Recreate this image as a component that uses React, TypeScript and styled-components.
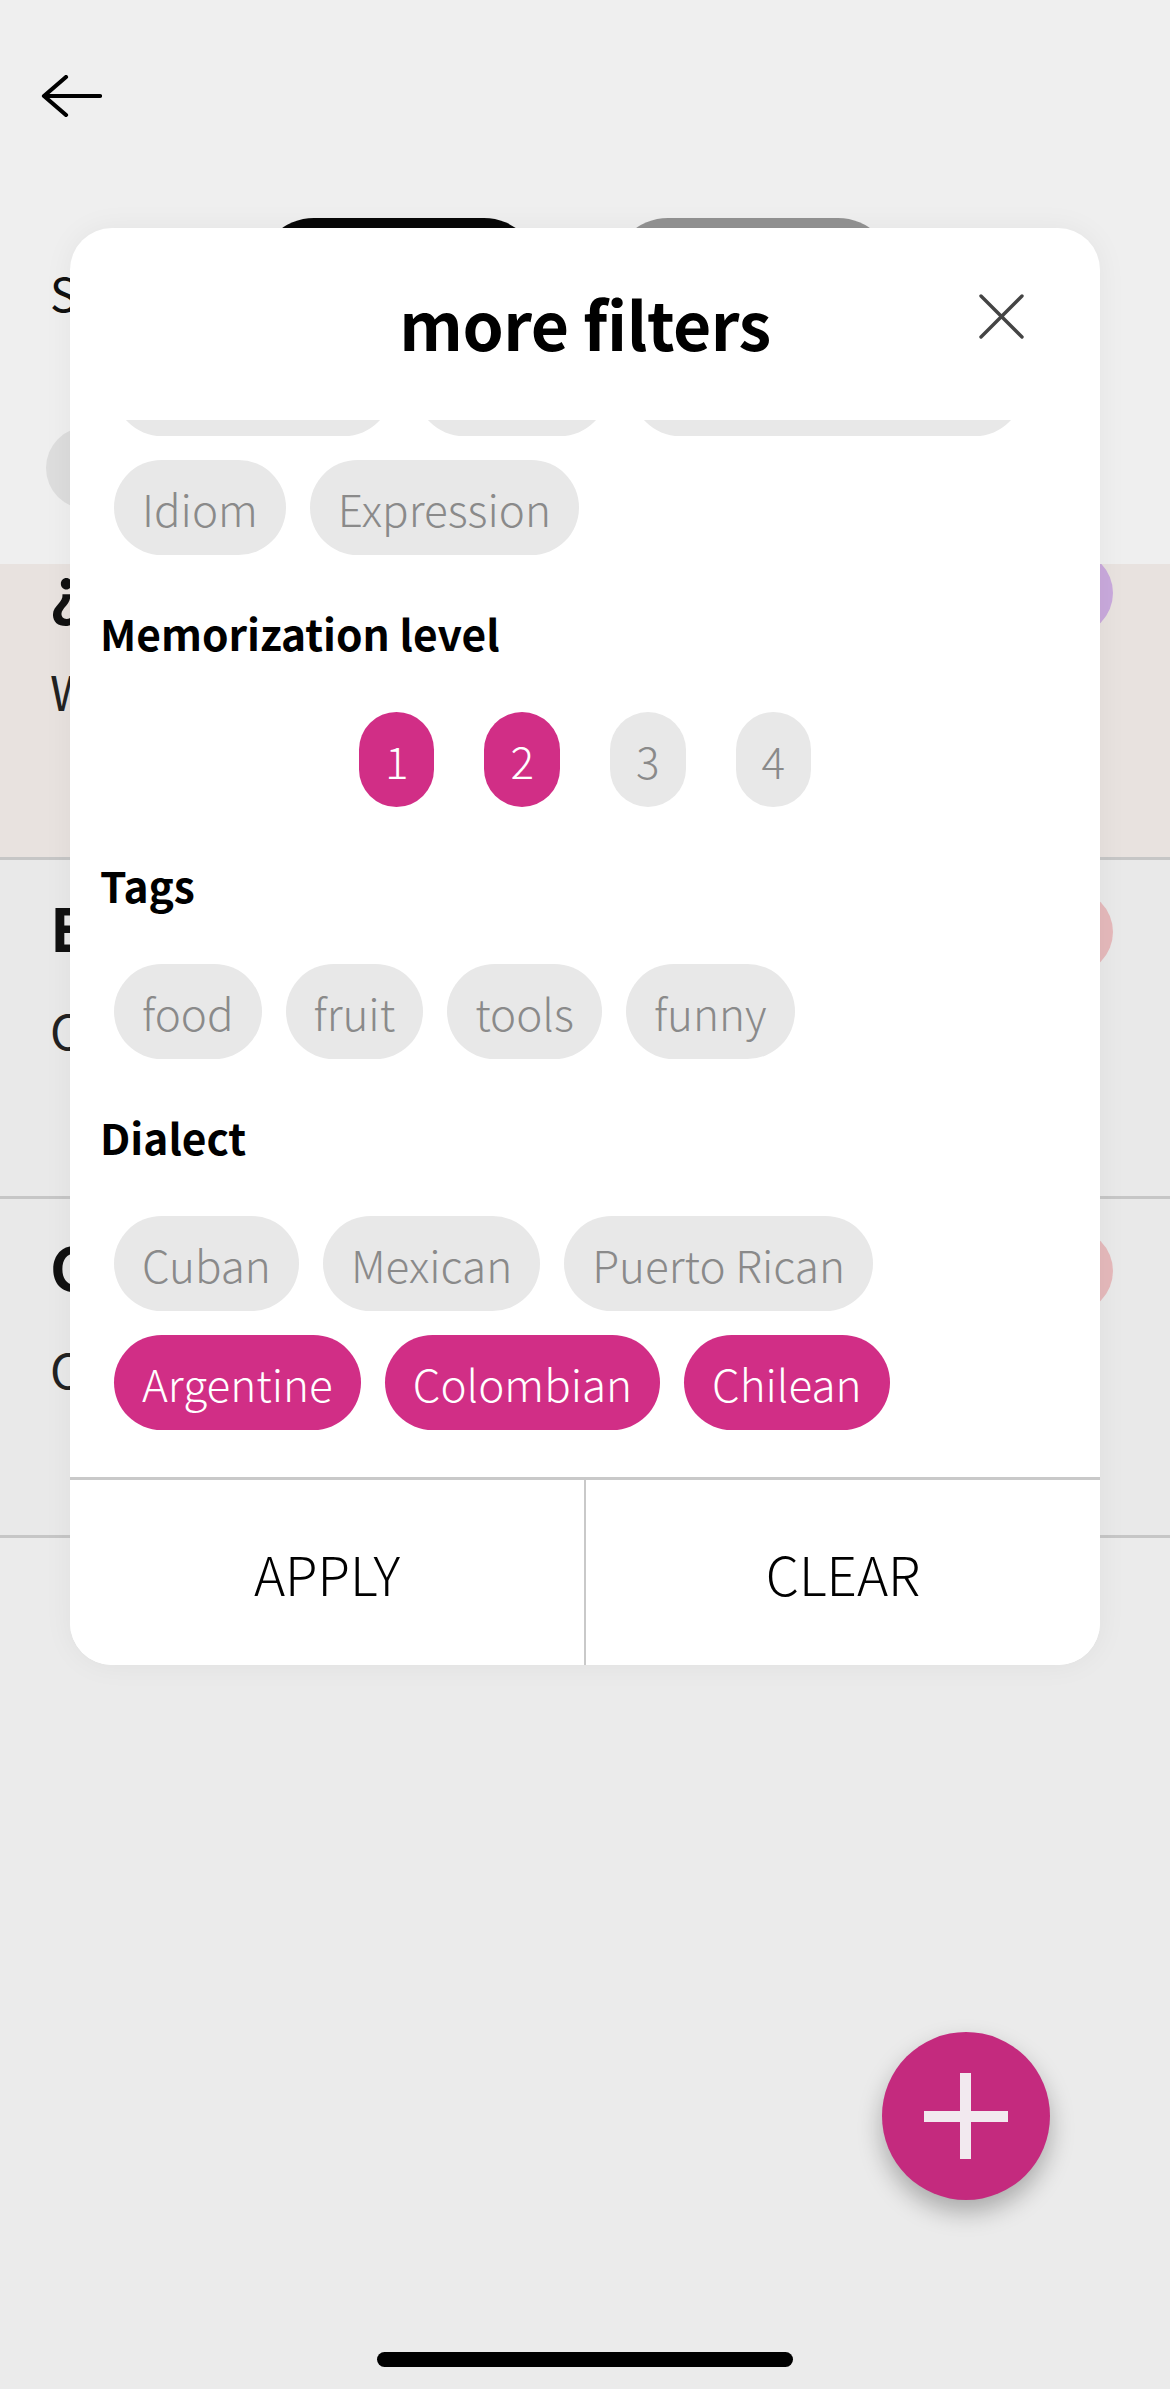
import React, { useLayoutEffect, useRef } from "react";
import styled, { createGlobalStyle } from "styled-components";

const GlobalStyle = createGlobalStyle`
  html, body { margin: 0; padding: 0; background: #ebebeb; }
  body { font-family: "Noto Sans CJK SC", "Noto Sans", sans-serif; }
  * { box-sizing: border-box; }
`;

const Screen = styled.div`
  position: relative;
  width: 1170px;
  height: 2389px;
  overflow: hidden;
  background: #ebebeb;
  display: flex;
  flex-direction: column;
  font-family: "Noto Sans CJK SC", "Noto Sans", sans-serif;
`;

const TopArea = styled.div`
  background: #efefef;
  height: 564px;
  flex-shrink: 0;
  display: flex;
  flex-direction: column;
  padding: 75px 0 0 41px;
`;

const BackButton = styled.div`
  width: 61px;
  height: 42px;
  display: flex;
`;

const SortRow = styled.div`
  margin-top: 101px;
  display: flex;
  align-items: center;
  height: 140px;
`;

const SortLabel = styled.span`
  font-size: 46px;
  color: #111;
  width: 217px;
  padding-left: 9px;
  padding-top: 8px;
`;

const SortPill = styled.div<{ $dark?: boolean }>`
  width: 282px;
  height: 140px;
  border-radius: 56px;
  background: ${(p) => (p.$dark ? "#080808" : "#929292")};
  margin-right: 72px;
`;

const FilterChipRow = styled.div`
  margin-top: 69px;
  display: flex;
  gap: 24px;
  padding-left: 5px;
`;

const FilterChip = styled.div`
  height: 82px;
  width: 260px;
  border-radius: 41px;
  background: #dddddd;
`;

const ListScroll = styled.div`
  flex: 1;
  overflow-y: auto;
  scrollbar-width: none;
  &::-webkit-scrollbar { display: none; }
`;

const Row = styled.div<{ $tint?: boolean }>`
  height: 339px;
  background: ${(p) => (p.$tint ? "#e8e2df" : "#e9e9e9")};
  border-bottom: 3px solid #c6c6c6;
  display: flex;
  justify-content: space-between;
  align-items: flex-start;
  padding: 30px 57px 0 50px;
`;

const RowText = styled.div`
  display: flex;
  flex-direction: column;
  gap: 38px;
`;

const RowTitle = styled.div`
  font-size: 60px;
  font-weight: 700;
  line-height: 72px;
  color: #111;
`;

const RowSub = styled.div`
  font-size: 48px;
  line-height: 58px;
  color: #222;
`;

const RowDot = styled.div<{ $color: string }>`
  width: 84px;
  height: 84px;
  border-radius: 50%;
  background: ${(p) => p.$color};
`;

const ListSpacer = styled.div`
  height: 1400px;
`;

const Fab = styled.button`
  position: absolute;
  right: 120px;
  bottom: 189px;
  width: 168px;
  height: 168px;
  border-radius: 50%;
  border: none;
  background: #c42a7e;
  box-shadow: 0 12px 24px rgba(0, 0, 0, 0.28);
  display: flex;
  align-items: center;
  justify-content: center;
  padding: 0;
`;

const HomeIndicator = styled.div`
  position: absolute;
  left: 377px;
  bottom: 22px;
  width: 416px;
  height: 15px;
  border-radius: 8px;
  background: #000;
`;

const Modal = styled.div`
  position: absolute;
  left: 70px;
  top: 228px;
  width: 1030px;
  height: 1437px;
  background: #fff;
  border-radius: 42px;
  box-shadow: 0 0 30px rgba(0, 0, 0, 0.05);
  display: flex;
  flex-direction: column;
  overflow: hidden;
`;

const ModalHeader = styled.div`
  height: 192px;
  flex-shrink: 0;
  display: grid;
  grid-template-columns: 1fr auto 1fr;
  align-items: start;
  padding-top: 54px;
`;

const ModalTitle = styled.h1`
  grid-column: 2;
  margin: 0;
  font-size: 66px;
  line-height: 80px;
  font-weight: 700;
  color: #000;
  letter-spacing: -0.5px;
`;

const CloseButton = styled.button`
  grid-column: 3;
  justify-self: end;
  margin: 12px 76px 0 0;
  width: 45px;
  height: 45px;
  padding: 0;
  border: none;
  background: none;
  display: flex;
`;

const ModalScroll = styled.div`
  flex: 1;
  overflow-y: auto;
  scrollbar-width: none;
  &::-webkit-scrollbar { display: none; }
`;

const ScrollContent = styled.div`
  display: flex;
  flex-direction: column;
  gap: 51px;
  padding: 30px 30px 47px 30px;
`;

const Section = styled.section`
  display: flex;
  flex-direction: column;
  gap: 53px;
`;

const SectionLabel = styled.h2`
  margin: 0;
  font-size: 42.5px;
  line-height: 53px;
  font-weight: 700;
  color: #000;
`;

const ChipList = styled.div<{ $center?: boolean }>`
  display: flex;
  flex-wrap: wrap;
  row-gap: 24px;
  column-gap: ${(p) => (p.$center ? "50px" : "24px")};
  justify-content: ${(p) => (p.$center ? "center" : "flex-start")};
  margin-left: ${(p) => (p.$center ? "0" : "14px")};
  max-width: ${(p) => (p.$center ? "none" : "930px")};
`;

const Chip = styled.span<{ $on?: boolean; $narrow?: boolean }>`
  display: inline-flex;
  align-items: center;
  justify-content: center;
  height: 95px;
  padding: 0 ${(p) => (p.$narrow ? "26px" : "28px")};
  border-radius: 999px;
  font-size: 44px;
  font-weight: 300;
  line-height: 1;
  background: ${(p) => (p.$on ? "#d12e86" : "#e8e8e8")};
  color: ${(p) => (p.$on ? "#ffffff" : "#8a8a8a")};
`;

const Footer = styled.div`
  flex-shrink: 0;
  height: 188px;
  border-top: 3px solid #c9c9c9;
  display: flex;
`;

const FooterButton = styled.button<{ $divider?: boolean }>`
  flex: 1;
  border: none;
  border-left: ${(p) => (p.$divider ? "2px solid #c9c9c9" : "none")};
  background: #fff;
  font-family: "Noto Sans CJK SC", "Noto Sans", sans-serif;
  font-size: 53px;
  font-weight: 300;
  color: #000;
  padding: 0;
`;

const ArrowIcon = () => (
  <svg width="61" height="42" viewBox="0 0 61 42" fill="none">
    <path d="M3 21 H59 M25 2 L3 21 L25 40" stroke="#000" strokeWidth="4.2" strokeLinecap="round" strokeLinejoin="round" />
  </svg>
);

const CloseIcon = () => (
  <svg width="45" height="45" viewBox="0 0 45 45" fill="none">
    <path d="M2 2 L43 43 M43 2 L2 43" stroke="#444" strokeWidth="3.4" strokeLinecap="round" />
  </svg>
);

const PlusIcon = () => (
  <svg width="84" height="86" viewBox="0 0 84 86">
    <rect x="36" y="0" width="11" height="86" fill="#f2e9ef" />
    <rect x="0" y="38" width="84" height="11" fill="#f2e9ef" />
  </svg>
);

const types = ["Vocabulary ", "Phrase", "Verb conjugation", "Idiom", "Expression"];
const levels = [
  { n: "1", on: true },
  { n: "2", on: true },
  { n: "3", on: false },
  { n: "4", on: false },
];
const tags = ["food", "fruit", "tools", "funny"];
const dialects = [
  { name: "Cuban", on: false },
  { name: "Mexican", on: false },
  { name: "Puerto Rican", on: false },
  { name: "Argentine", on: true },
  { name: "Colombian", on: true },
  { name: "Chilean", on: true },
];

const rows = [
  { title: "¿Qué tal?", sub: "What's up?", dot: "#c9a9dc", tint: true },
  { title: "El coche", sub: "Car", dot: "#e5b9bb", tint: false },
  { title: "Coco", sub: "Coconut", dot: "#e5b9bb", tint: false },
];

export default function App() {
  const modalScroll = useRef<HTMLDivElement>(null);
  const listScroll = useRef<HTMLDivElement>(null);

  useLayoutEffect(() => {
    if (modalScroll.current) {
      modalScroll.current.scrollTop = modalScroll.current.scrollHeight;
    }
    if (listScroll.current) {
      listScroll.current.scrollTop = 43;
    }
  }, []);

  return (
    <Screen>
      <GlobalStyle />
      <TopArea>
        <BackButton>
          <ArrowIcon />
        </BackButton>
        <SortRow>
          <SortLabel>Sort</SortLabel>
          <SortPill $dark />
          <SortPill />
        </SortRow>
        <FilterChipRow>
          <FilterChip />
          <FilterChip />
        </FilterChipRow>
      </TopArea>
      <ListScroll ref={listScroll}>
        {rows.map((r) => (
          <Row key={r.title} $tint={r.tint}>
            <RowText>
              <RowTitle>{r.title}</RowTitle>
              <RowSub>{r.sub}</RowSub>
            </RowText>
            <RowDot $color={r.dot} />
          </Row>
        ))}
        <ListSpacer />
      </ListScroll>

      <Fab aria-label="add">
        <PlusIcon />
      </Fab>
      <HomeIndicator />

      <Modal>
        <ModalHeader>
          <ModalTitle>more filters</ModalTitle>
          <CloseButton aria-label="close">
            <CloseIcon />
          </CloseButton>
        </ModalHeader>
        <ModalScroll ref={modalScroll}>
          <ScrollContent>
            <Section>
              <SectionLabel>Type</SectionLabel>
              <ChipList>
                {types.map((t) => (
                  <Chip key={t}>{t}</Chip>
                ))}
              </ChipList>
            </Section>
            <Section>
              <SectionLabel>Memorization level</SectionLabel>
              <ChipList $center>
                {levels.map((l) => (
                  <Chip key={l.n} $on={l.on} $narrow>
                    {l.n}
                  </Chip>
                ))}
              </ChipList>
            </Section>
            <Section>
              <SectionLabel>Tags</SectionLabel>
              <ChipList>
                {tags.map((t) => (
                  <Chip key={t}>{t}</Chip>
                ))}
              </ChipList>
            </Section>
            <Section>
              <SectionLabel>Dialect</SectionLabel>
              <ChipList>
                {dialects.map((d) => (
                  <Chip key={d.name} $on={d.on}>
                    {d.name}
                  </Chip>
                ))}
              </ChipList>
            </Section>
          </ScrollContent>
        </ModalScroll>
        <Footer>
          <FooterButton>APPLY</FooterButton>
          <FooterButton $divider>CLEAR</FooterButton>
        </Footer>
      </Modal>
    </Screen>
  );
}
